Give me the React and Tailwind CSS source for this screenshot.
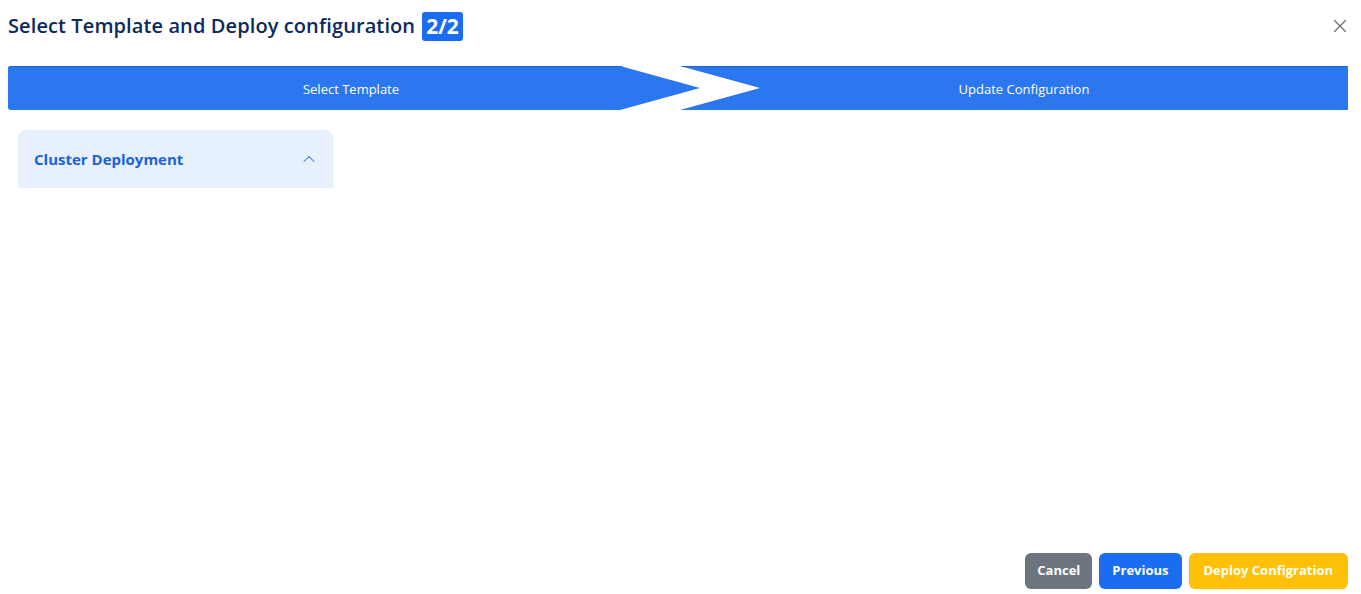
import { X, ChevronUp } from "lucide-react";

const font = { fontFamily: '"Open Sans", "Noto Sans", sans-serif' };

const App = () => {
  return (
    <div className="flex h-screen flex-col bg-white pl-2 pr-[13px]" style={font}>
      <div className="flex h-[52px] items-center justify-between">
        <div className="flex items-center gap-[7px]">
          <h1 className="text-[20px] font-semibold tracking-[0.1px] text-[#0b2a5b]">
            Select Template and Deploy configuration
          </h1>
          <span className="rounded-[3px] bg-[#1a6cf0] px-[4px] py-px text-[21px] leading-[27px] font-bold text-white">
            2/2
          </span>
        </div>
        <button className="mr-[-3px] text-[#6f6f6f]">
          <X className="size-[22px]" strokeWidth={1.4} />
        </button>
      </div>

      <div className="mt-[14px] flex h-[44px]">
        <div className="flex w-[692px] shrink-0 items-center justify-center rounded-l-[3px] bg-[#2b77ef] pt-[3px] pr-[6px] text-[13px] text-white shadow-[inset_0_1px_0_#1f63cf] [clip-path:polygon(0_0,calc(100%-80px)_0,100%_50%,calc(100%-80px)_100%,0_100%)]">
          Select Template
        </div>
        <div className="ml-[-20px] flex flex-1 items-center justify-center bg-[#2b77ef] pt-[3px] pl-[20px] text-[13px] text-white shadow-[inset_0_1px_0_#1f63cf] [clip-path:polygon(0_0,100%_0,100%_100%,0_100%,80px_50%)]">
          Update Configuration
        </div>
      </div>

      <div className="mt-5 ml-[10px] flex h-[58px] w-[315px] items-center justify-between rounded-t-[8px] bg-[#e7f0fd] pr-[14px] pl-4">
        <span className="text-[15px] font-bold text-[#1a62d9]">Cluster Deployment</span>
        <ChevronUp className="size-5 text-[#3a78dd]" strokeWidth={1.25} />
      </div>

      <div className="flex-1" />

      <div className="flex justify-end gap-[7px] pb-[5px]">
        <button className="h-9 rounded-[6px] bg-[#6c757d] px-[12px] text-[13px] font-bold text-white">
          Cancel
        </button>
        <button className="h-9 rounded-[6px] bg-[#1a6cf0] px-[13px] text-[13px] font-bold text-white">
          Previous
        </button>
        <button className="h-9 rounded-[6px] bg-[#ffc107] px-[15px] text-[13px] font-bold text-white">
          Deploy Configration
        </button>
      </div>
    </div>
  );
};

export default App;
